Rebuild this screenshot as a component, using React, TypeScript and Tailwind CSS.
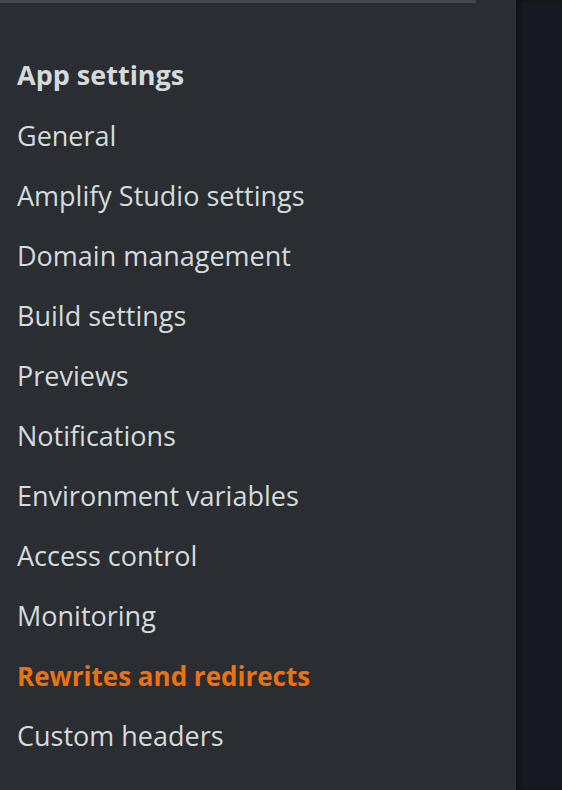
import React from 'react';

const ITEMS = [
  'General',
  'Amplify Studio settings',
  'Domain management',
  'Build settings',
  'Previews',
  'Notifications',
  'Environment variables',
  'Access control',
  'Monitoring',
  'Rewrites and redirects',
  'Custom headers',
];

const ACTIVE = 'Rewrites and redirects';

export default function App() {
  return (
    <div className="flex h-[790px] w-[562px] overflow-hidden bg-[#16191f] font-['Open_Sans',sans-serif]">
      {/* Side navigation */}
      <nav className="flex h-full w-[516px] shrink-0 flex-col bg-[#2a2e33]">
        <div className="h-[3px] w-[476px] bg-[#424852]" />
        <div className="flex flex-col pl-[17px] pt-[55px]">
          <h2 className="flex h-[34px] items-center text-[27px] font-bold text-[#d5dbdb]">App settings</h2>
          <ul className="mt-[14px] flex flex-col">
            {ITEMS.map((item) => (
              <li
                key={item}
                className={`flex h-[60px] items-center ${
                  item === ACTIVE ? 'text-[26px] font-bold text-[#ec7211]' : 'text-[27px] text-[#d5dbdb]'
                }`}
              >
                {item}
              </li>
            ))}
          </ul>
        </div>
      </nav>
      <div className="h-full flex-1 bg-[#16191f] shadow-[inset_3px_0_4px_rgba(0,0,0,0.35)]" />
    </div>
  );
}
